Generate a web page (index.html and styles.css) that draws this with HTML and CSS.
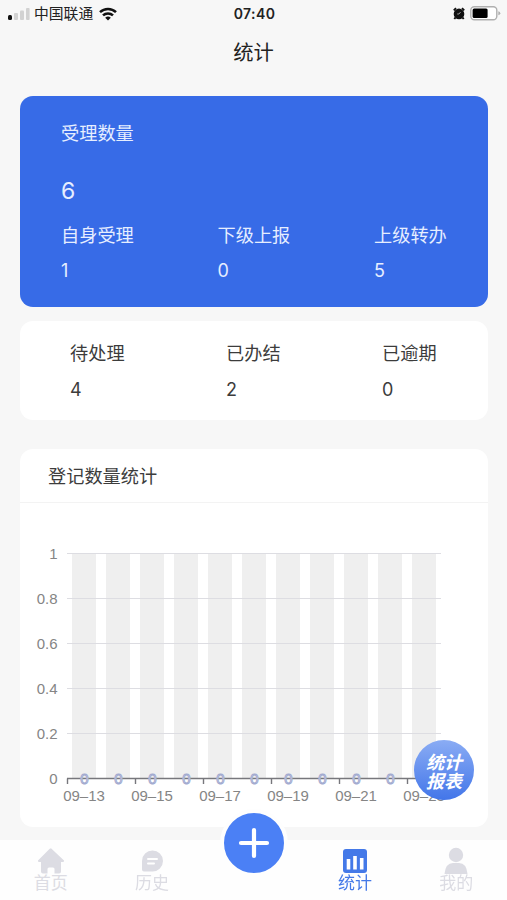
FILE: index.html
```
<!DOCTYPE html>
<html lang="zh-CN">
<head>
  <meta charset="UTF-8" />
  <meta name="viewport" content="width=device-width, initial-scale=1.0"/>
  <title>统计</title>
  <link rel="stylesheet" href="styles.css">
</head>
<body>
  <div class="status-bar">
    <div class="status-left">
      <svg class="signal" width="22" height="14" viewBox="0 0 22 14">
        <rect x="0" y="8" width="4" height="5" rx="1.5" fill="#111"/>
        <rect x="6" y="6" width="4" height="7" rx="1" fill="#d2d2d2"/>
        <rect x="12" y="3.5" width="4" height="9.5" rx="1" fill="#d2d2d2"/>
        <rect x="18" y="1" width="3.6" height="12" rx="1" fill="#d2d2d2"/>
      </svg>
      <span>中国联通</span>
      <svg class="wifi" width="18" height="14" viewBox="0 0 18 14">
        <path d="M1 5.2a11.5 11.5 0 0 1 16 0M4 8.4a7.2 7.2 0 0 1 10 0" fill="none" stroke="#111" stroke-width="2.5"/>
        <path d="M9 13.6L6.2 10.8a4 4 0 0 1 5.6 0z" fill="#111"/>
      </svg>
    </div>
    <div class="status-time">07:40</div>
    <div class="status-right">
      <svg width="12" height="13" viewBox="0 0 12 13">
        <path d="M.8 3.4L3 1.2M11.2 3.4L9 1.2M2.4 10.6L1.3 12M9.6 10.6L10.7 12" stroke="#111" stroke-width="1.9"/>
        <circle cx="6" cy="6.9" r="5.3" fill="#111"/>
        <path d="M7.600 5L6 7H4.200" fill="none" stroke="#bbb" stroke-width=".8"/>
      </svg>
      <svg width="31" height="15" viewBox="0 0 31 15">
        <rect x=".8" y=".8" width="26" height="13" rx="3.5" fill="#fff" stroke="#b0b0b0" stroke-width="1.4"/>
        <rect x="2.6" y="2.6" width="15" height="9.4" rx="1.5" fill="#000"/>
        <path d="M28.3 5.3q2 .6 2 2t-2 2z" fill="#b0b0b0"/>
      </svg>
    </div>
  </div>

  <h1 class="page-title">统计</h1>

  <div class="main">
    <!-- 受理数量 -->
    <div class="card total-card">
      <div class="total">
        <div class="label">受理数量</div>
        <div class="total-num">6</div>
      </div>
      <div class="row">
        <div><div class="label">自身受理</div><div class="num">1</div></div>
        <div><div class="label">下级上报</div><div class="num">0</div></div>
        <div><div class="label">上级转办</div><div class="num">5</div></div>
      </div>
    </div>

    <!-- 处理情况 -->
    <div class="card state-card">
      <div class="row">
        <div><div class="label">待处理</div><div class="num">4</div></div>
        <div><div class="label">已办结</div><div class="num">2</div></div>
        <div><div class="label">已逾期</div><div class="num">0</div></div>
      </div>
    </div>

    <!-- 图表 -->
    <div class="card chart-card">
      <div class="chart-title">登记数量统计</div>
      <svg class="chart" id="chart" width="468" height="324" viewBox="20 503 468 324"></svg>
    </div>
  </div>

  <div class="report-btn"><span>统计</span><span>报表</span></div>

  <div class="tabbar">
    <div class="tab">
      <svg width="30" height="28" viewBox="0 0 30 28">
        <path d="M15 1.2L28 13.6q.6 1.4-1 1.4H25V24.500q0 2-2 2H18.500V22q0-1.500-1.500-1.500H13q-1.500 0-1.500 1.500v4.500H7q-2 0-2-2V15H3q-1.600 0-1-1.400L13.700 1.700q1.300-1 2.600 0z" fill="#dcdce3"/>
      </svg>
      <span>首页</span>
    </div>
    <div class="tab">
      <svg width="30" height="28" viewBox="0 0 30 28">
        <path d="M15.500 3.500a10.500 10.500 0 1 1 0 21H7q-2 0-2-2V14A10.500 10.500 0 0 1 15.500 3.500z" fill="#dcdce3"/>
        <path d="M11 12h9M11 16.500h6" stroke="#fff" stroke-width="2" stroke-linecap="round"/>
      </svg>
      <span>历史</span>
    </div>
    <div class="tab tab-add">
      <div class="add-btn">
        <svg width="32" height="32" viewBox="0 0 32 32">
          <path d="M16 3v26M3 16h26" stroke="#fff" stroke-width="4.200" stroke-linecap="round"/>
        </svg>
      </div>
    </div>
    <div class="tab active">
      <svg width="30" height="28" viewBox="0 0 30 28">
        <rect x="3" y="2" width="24" height="24" rx="3" fill="#4479e8"/>
        <path d="M8.500 12v10.500M15 9v13.500M21.700 11v11.500" stroke="#fff" stroke-width="3.600"/>
      </svg>
      <span>统计</span>
    </div>
    <div class="tab">
      <svg width="30" height="28" viewBox="0 0 30 28">
        <circle cx="15" cy="8" r="7.200" fill="#dcdce3"/>
        <path d="M3.500 27Q4.500 16 12 16h6q7.500 0 8.500 11z" fill="#dcdce3"/>
      </svg>
      <span>我的</span>
    </div>
  </div>

  <script src="chart.js"></script>
</body>
</html>
```
FILE: styles.css
```
body {
  margin: 0;
  height: 900px;
  overflow: hidden;
  font-family: Inter, 'Noto Sans CJK SC', sans-serif;
  background: #f7f7f7;
  color: #3c3c3c;
}

.status-bar {
  display: grid;
  grid-template-columns: 1fr auto 1fr;
  align-items: center;
  height: 27px;
  padding: 0 6px 0 8px;
  font-size: 14.8px;
  color: #222;
}

.status-left, .status-right {
  display: flex;
  align-items: center;
}

.status-left span {
  margin: 0 6px 0 4px;
  line-height: 20px;
}

.status-right {
  justify-content: flex-end;
  gap: 5px;
}

.status-time {
  font-size: 14px;
  font-weight: 600;
  letter-spacing: 0.4px;
}

.page-title {
  margin: 0;
  height: 69px;
  line-height: 52px;
  font-size: 20.3px;
  font-weight: 400;
  text-align: center;
  color: #222;
}

.main {
  padding: 0 19px 0 20px;
}

.card {
  background: white;
  border-radius: 13px;
}

.label {
  font-size: 18.2px;
  line-height: 28px;
}

.num {
  font-size: 18px;
  line-height: 24px;
}

.row {
  display: grid;
  grid-template-columns: 156.5px 156.5px 1fr;
}

.total-card {
  height: 188px;
  padding: 23px 0 0 41px;
  background: #376be7;
  color: #e6eeff;
}

.total-num {
  margin: 29px 0 15px;
  font-size: 23px;
  line-height: 30px;
}

.total-card .num {
  margin-top: 10px;
}

.state-card {
  height: 81px;
  margin-top: 14px;
  padding: 18px 0 0 50px;
}

.state-card .row {
  grid-template-columns: 156px 156px 1fr;
}

.state-card .num {
  margin-top: 11px;
}

.chart-card {
  margin-top: 29px;
  height: 378px;
}

.chart-title {
  height: 53px;
  line-height: 55px;
  padding-left: 28px;
  font-size: 18.2px;
  border-bottom: 1px solid #f3f3f3;
}

.chart {
  display: block;
}

.chart text {
  font-family: 'Liberation Sans', Arial, sans-serif;
  font-size: 15px;
  fill: #858585;
}

.chart .y-label {
  text-anchor: end;
}

.chart .x-label {
  text-anchor: middle;
}

.chart .value {
  text-anchor: middle;
  fill: #eef0f8;
  stroke: #a3abd0;
  stroke-width: 1px;
}

.report-btn {
  position: absolute;
  left: 414px;
  top: 740px;
  width: 60px;
  height: 60px;
  box-sizing: border-box;
  padding-top: 13px;
  border-radius: 50%;
  background: linear-gradient(#8aacf4, #4376e9);
  color: white;
  display: flex;
  flex-direction: column;
  align-items: center;
  font-size: 18px;
  font-weight: 700;
  font-style: italic;
  line-height: 19px;
}

.tabbar {
  position: fixed;
  left: 0;
  right: 0;
  bottom: 0;
  height: 60px;
  background: #fefefe;
  display: grid;
  grid-template-columns: repeat(5, 1fr);
}

.tab {
  display: flex;
  flex-direction: column;
  align-items: center;
  padding-top: 7px;
  color: #dcdce3;
  font-size: 17px;
}

.tab span {
  line-height: 22px;
  margin-top: -3px;
}

.tab.active {
  color: #4479e8;
}

.tab-add {
  padding-top: 0;
}

.add-btn {
  width: 60px;
  height: 60px;
  margin: -31px 0 0 1px;
  border: 4px solid #fefefe;
  border-radius: 50%;
  background: #4b80f5;
  display: flex;
  align-items: center;
  justify-content: center;
}
```
FILE: chart.js
```
const chart = document.getElementById("chart");

const left = 67;
const right = 441;
const top0 = 553.5;
const bottom = 778.5;
const days = [13, 14, 15, 16, 17, 18, 19, 20, 21, 22, 23];
const values = [0, 0, 0, 0, 0, 0, 0, 0, 0, 0];
const step = (right - left) / days.length;

let html = "";

days.forEach((day, i) => {
  html += `<rect x="${left + i * step + 5}" y="${top0}" width="24" height="${bottom - top0}" fill="#efefef"/>`;
});

["1", "0.8", "0.6", "0.4", "0.2", "0"].forEach((label, i) => {
  const y = top0 + i * 45;
  if (y < bottom) {
    html += `<line x1="${left}" y1="${y}" x2="${right}" y2="${y}" stroke="#dddde2"/>`;
  }
  html += `<text class="y-label" x="57.5" y="${y + 5}">${label}</text>`;
});

html += `<line x1="${left}" y1="${bottom}" x2="${right}" y2="${bottom}" stroke="#77777c" stroke-width="1.4"/>`;

days.forEach((day, i) => {
  const x = left + i * step;
  if (i % 2 === 0) {
    html += `<line x1="${x + 0.5}" y1="${bottom}" x2="${x + 0.5}" y2="784" stroke="#77777c" stroke-width="1.4"/>`;
    html += `<text class="x-label" x="${x + step / 2}" y="801">09–${day}</text>`;
  }
});

values.forEach((value, i) => {
  html += `<text class="value" x="${left + (i + 0.5) * step + 0.5}" y="783.5">${value}</text>`;
});

chart.innerHTML = html;
```
